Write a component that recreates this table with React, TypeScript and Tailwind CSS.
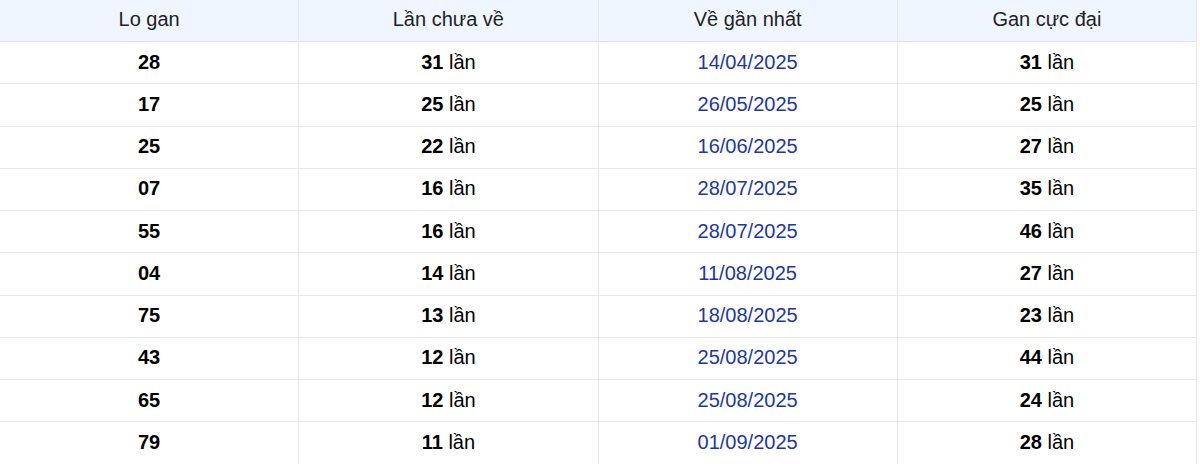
import React from "react";

const rows: [string, string, string, string][] = [
  ["28", "31", "14/04/2025", "31"],
  ["17", "25", "26/05/2025", "25"],
  ["25", "22", "16/06/2025", "27"],
  ["07", "16", "28/07/2025", "35"],
  ["55", "16", "28/07/2025", "46"],
  ["04", "14", "11/08/2025", "27"],
  ["75", "13", "18/08/2025", "23"],
  ["43", "12", "25/08/2025", "44"],
  ["65", "12", "25/08/2025", "24"],
  ["79", "11", "01/09/2025", "28"],
];

const headers = ["Lo gan", "Lần chưa về", "Về gần nhất", "Gan cực đại"];

export default function App() {
  return (
    <div
      className="w-[1200px] h-[464px] overflow-hidden bg-white"
      style={{ fontFamily: '"Liberation Sans", Arial, sans-serif' }}
    >
      <div className="w-[1197px] grid grid-cols-4 text-[20px] text-[#222]">
        {headers.map((h) => (
          <div
            key={h}
            className="h-[42px] flex items-center justify-center bg-[#eff6ff] border-r border-b border-[#e3e6ea] pb-[3px]"
          >
            {h}
          </div>
        ))}
        {rows.map((r, i) => (
          <React.Fragment key={i}>
            <div className="h-[42.25px] pb-[2px] flex items-center justify-center border-r border-b border-[#e8e8e8] font-bold text-black">
              {r[0]}
            </div>
            <div className="h-[42.25px] pb-[2px] flex items-center justify-center border-r border-b border-[#e8e8e8] text-black">
              <span className="font-bold">{r[1]}</span>&nbsp;lần
            </div>
            <div className="h-[42.25px] pb-[2px] flex items-center justify-center border-r border-b border-[#e8e8e8] text-[#1c37a8]">
              {r[2]}
            </div>
            <div className="h-[42.25px] pb-[2px] flex items-center justify-center border-r border-b border-[#e8e8e8] text-black">
              <span className="font-bold">{r[3]}</span>&nbsp;lần
            </div>
          </React.Fragment>
        ))}
      </div>
    </div>
  );
}
